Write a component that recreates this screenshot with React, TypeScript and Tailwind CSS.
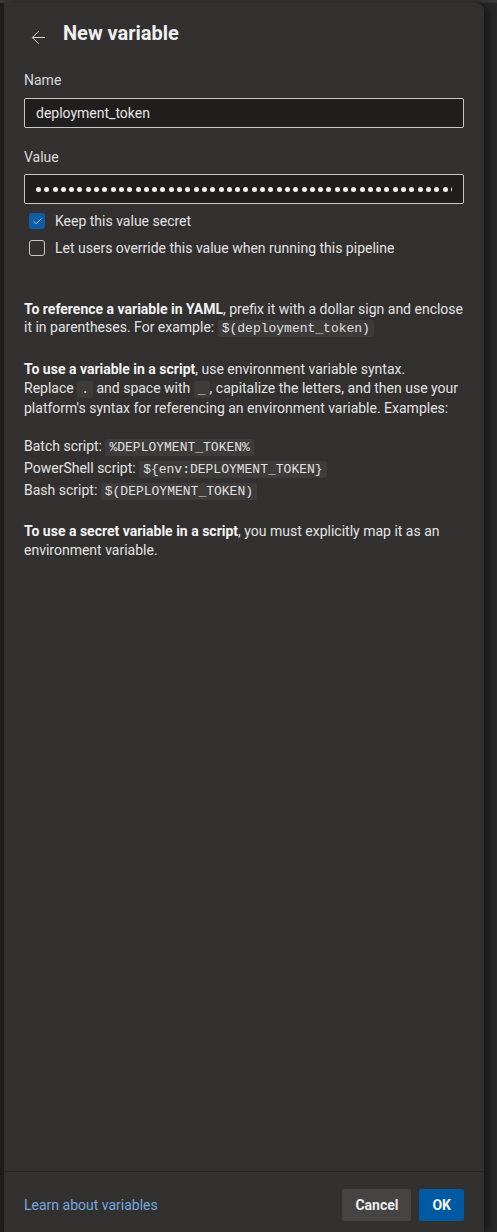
import { ArrowLeft, Check } from 'lucide-react';

const font = { fontFamily: 'Roboto, "Noto Sans", sans-serif' };

function Code({ children }: { children: React.ReactNode }) {
  return (
    <code className="rounded-[2px] bg-[#3d3c3b] px-[4px] py-[1px] font-['Liberation_Mono',monospace] text-[13px] text-[#e0e0e0]">
      {children}
    </code>
  );
}

export default function App() {
  return (
    <div className="h-[1232px] overflow-hidden bg-[#2a2a2a]" style={font}>
      {/* page behind the panel */}
      <div className="h-[3px] bg-[#3a3a3a]" />
      <div className="flex h-[1229px]">
        <div className="w-[4px] bg-[#1f1f1f]" />
        <div className="flex w-[480px] flex-col rounded-tr-[8px] bg-[#323130] text-[#e3e3e3] shadow-[4px_0_12px_rgba(0,0,0,0.55)]">
          {/* header */}
          <div className="flex h-[44px] items-start px-[20px] pt-[16px]">
            <button className="mt-[8px] ml-[4px] text-[#d8d8d8]">
              <ArrowLeft className="h-[21px] w-[21px]" strokeWidth={1.1} />
            </button>
            <h1 className="ml-[14px] text-[20px] leading-[28px] font-bold text-[#f0f0f0]">New variable</h1>
          </div>

          {/* body */}
          <div className="flex-1 px-[20px]">
            <label className="mt-[23px] block text-[14px] leading-[20px] text-[#dadada]">Name</label>
            <div className="mt-[8px] flex h-[30px] items-center rounded-[2px] border border-[#c8c8c8] bg-[#201f1e] px-[11px] text-[14px] text-[#e6e6e6]">
              deployment_token
            </div>

            <label className="mt-[19px] block text-[14px] leading-[20px] text-[#dadada]">Value</label>
            <div className="mt-[7px] flex h-[30px] items-center overflow-hidden rounded-[2px] border border-[#c8c8c8] bg-[#201f1e] pl-[11px] pr-[11px]">
              <div className="flex gap-[3.3px] overflow-hidden">
                {Array.from({ length: 52 }).map((_, i) => (
                  <span key={i} className="h-[5px] w-[5px] shrink-0 rounded-full bg-[#f2f2f2]" />
                ))}
              </div>
            </div>

            <div className="mt-[7px] flex items-center gap-[10px] pl-[5px] text-[14px] leading-[20px]">
              <span className="flex h-[16px] w-[16px] items-center justify-center rounded-[3px] bg-[#0f5ca6]">
                <Check className="h-[11px] w-[11px] text-[#dfe8f2]" strokeWidth={1.6} />
              </span>
              <span>Keep this value secret</span>
            </div>
            <div className="mt-[7px] flex items-center gap-[10px] pl-[5px] text-[14px] leading-[20px]">
              <span className="h-[16px] w-[16px] rounded-[3px] border border-[#c8c8c8]" />
              <span>Let users override this value when running this pipeline</span>
            </div>

            <div className="mt-[42px] whitespace-nowrap text-[14px] leading-[18px]">
              <p>
                <b className="font-bold text-[#f2f2f2]">To reference a variable in YAML</b>, prefix it with a dollar sign and enclose
                <br />
                it in parentheses. For example: <Code>$(deployment_token)</Code>
              </p>

              <p className="mt-[22px] leading-[19px]">
                <b className="font-bold text-[#f2f2f2]">To use a variable in a script</b>, use environment variable syntax.
                <br />
                Replace <Code>.</Code> and space with <Code>_</Code>, capitalize the letters, and then use your
                <br />
                platform's syntax for referencing an environment variable. Examples:
              </p>

              <div className="mt-[18px] leading-[20px]">
                <div>
                  Batch script: <Code>%DEPLOYMENT_TOKEN%</Code>
                </div>
                <div>
                  PowerShell script: <Code>{'${env:DEPLOYMENT_TOKEN}'}</Code>
                </div>
                <div>
                  Bash script: <Code>$(DEPLOYMENT_TOKEN)</Code>
                </div>
              </div>

              <p className="mt-[20px] leading-[19px]">
                <b className="font-bold text-[#f2f2f2]">To use a secret variable in a script</b>, you must explicitly map it as an
                <br />
                environment variable.
              </p>
            </div>
          </div>

          {/* footer */}
          <div className="flex h-[61px] items-start justify-between border-t border-[#262525] px-[20px] pt-[17px]">
            <a className="mt-[6px] text-[14px] leading-[20px] text-[#75a7df]">Learn about variables</a>
            <div className="flex gap-[8px]">
              <button className="h-[32px] rounded-[2px] bg-[#454443] px-[13px] text-[14px] font-bold text-[#ececec]">Cancel</button>
              <button className="h-[32px] rounded-[2px] bg-[#005aa3] px-[13px] text-[14px] font-bold text-[#f4f4f4]">OK</button>
            </div>
          </div>
        </div>
        <div className="flex-1" />
      </div>
    </div>
  );
}
